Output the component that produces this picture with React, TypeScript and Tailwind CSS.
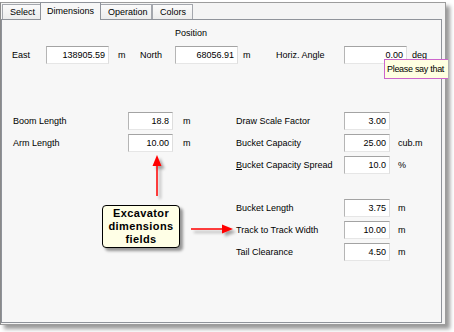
import React from 'react';

const font = "font-['Liberation_Sans',Arial,sans-serif]";

function Field({ value, className }: { value: string; className: string }) {
  return (
    <div
      className={`h-[18px] bg-white border border-t-[#a3a3a3] border-l-[#b5b5b5] border-r-[#dedede] border-b-[#e6e6e6] flex items-center justify-end pr-[3px] ${className}`}
    >
      {value}
    </div>
  );
}

function LeftRow({ label, value, unit }: { label: string; value: string; unit?: string }) {
  return (
    <div className="flex items-center h-[18px]">
      <div className="w-[115px]">{label}</div>
      <Field value={value} className="w-[45px]" />
      {unit && <div className="ml-[10px]">{unit}</div>}
    </div>
  );
}

function RightRow({ label, value, unit }: { label: React.ReactNode; value: string; unit?: string }) {
  return (
    <div className="flex items-center h-[18px]">
      <div className="w-[108px]">{label}</div>
      <Field value={value} className="w-[46px]" />
      {unit && <div className="ml-[8px]">{unit}</div>}
    </div>
  );
}

export default function App() {
  const tabs = ['Select', 'Dimensions', 'Operation', 'Colors'];
  return (
    <div className={`relative w-[454px] h-[332px] bg-white text-[9px] text-black leading-none ${font}`}>
      {/* Dialog window */}
      <div className="relative mt-[2px] w-[446px] h-[323px] bg-[#f4f4f4] border border-[#9c9c9c] border-l-[#8a8a8a] shadow-[4px_4px_4px_rgba(0,0,0,0.4)] flex flex-col">
        {/* Tab strip */}
        <div className="flex h-[16px] items-end pl-[1px] relative z-10">
          {tabs.map((t) =>
            t === 'Dimensions' ? (
              <div
                key={t}
                className="h-[18px] -mb-[1px] px-[6px] flex items-center bg-[#f7f7f7] border border-b-0 border-[#8f939a] w-[61px]"
              >
                {t}
              </div>
            ) : (
              <div
                key={t}
                className={`h-[15px] px-[7px] flex items-center bg-gradient-to-b from-[#fbfbfb] to-[#ececec] border border-[#a4a7ad] border-b-0 ${
                  t === 'Select' ? 'w-[38px] border-r-0' : t === 'Operation' ? 'w-[51px] border-l-0' : 'w-[41px] border-l-[#a4a7ad]'
                }`}
              >
                {t}
              </div>
            )
          )}
        </div>

        {/* Tab panel */}
        <div className="flex-1 mr-[3px] mb-[1px] bg-[#f7f7f7] border border-[#8f939a] flex flex-col">
          <div className="mt-[7px] ml-[173px] h-[12px] flex items-center">Position</div>

          <div className="mt-[7px] ml-[10px] flex items-center h-[18px]">
            <div className="w-[34px]">East</div>
            <Field value="138905.59" className="w-[63px]" />
            <div className="ml-[9px] w-[22px]">m</div>
            <div className="w-[35px]">North</div>
            <Field value="68056.91" className="w-[63px]" />
            <div className="ml-[5px] w-[33px]">m</div>
            <div className="w-[68px]">Horiz. Angle</div>
            <Field value="0.00" className="w-[63px]" />
            <div className="ml-[5px]">deg</div>
          </div>

          <div className="mt-[48px] ml-[11px] flex">
            <div className="w-[223px] flex flex-col gap-[4px]">
              <LeftRow label="Boom Length" value="18.8" unit="m" />
              <LeftRow label="Arm Length" value="10.00" unit="m" />
            </div>
            <div className="flex flex-col gap-[4px]">
              <RightRow label="Draw Scale Factor" value="3.00" />
              <RightRow label="Bucket Capacity" value="25.00" unit="cub.m" />
              <RightRow
                label={
                  <span>
                    <span className="underline underline-offset-1">B</span>ucket Capacity Spread
                  </span>
                }
                value="10.0"
                unit="%"
              />
              <div className="h-[17px]" />
              <RightRow label="Bucket Length" value="3.75" unit="m" />
              <RightRow label="Track to Track Width" value="10.00" unit="m" />
              <RightRow label="Tail Clearance" value="4.50" unit="m" />
            </div>
          </div>
        </div>
      </div>

      {/* Validation tooltip */}
      <div className="absolute left-[384px] top-[57px] w-[64px] h-[20px] bg-[#ffffe1] border border-r-0 border-[#cc66cc] flex items-center pl-[2px] whitespace-nowrap tracking-[-0.3px]">
        Please say that
      </div>

      {/* Annotation arrows */}
      <svg className="absolute left-0 top-0 pointer-events-none" width="454" height="332">
        <defs>
          <filter id="sh" x="-50%" y="-50%" width="200%" height="200%">
            <feDropShadow dx="3" dy="3" stdDeviation="1.5" floodColor="#000" floodOpacity="0.35" />
          </filter>
        </defs>
        <g filter="url(#sh)">
          <line x1="157" y1="163" x2="157" y2="194" stroke="#ff0000" strokeWidth="1.5" />
          <polygon points="157,153 152.5,164 161.5,164" fill="#ff0000" />
          <line x1="191" y1="227" x2="223" y2="227" stroke="#ff0000" strokeWidth="1.5" />
          <polygon points="233,227 222,222.5 222,231.5" fill="#ff0000" />
        </g>
      </svg>

      {/* Callout */}
      <div className="absolute left-[102px] top-[203px] w-[78px] h-[43px] bg-[#ffffe6] border border-black rounded-[4px] shadow-[3px_3px_3px_rgba(0,0,0,0.4)] flex flex-col items-center justify-center text-[11px] font-bold leading-[13px] tracking-[0.4px] text-black">
        <div>Excavator</div>
        <div>dimensions</div>
        <div>fields</div>
      </div>
    </div>
  );
}
